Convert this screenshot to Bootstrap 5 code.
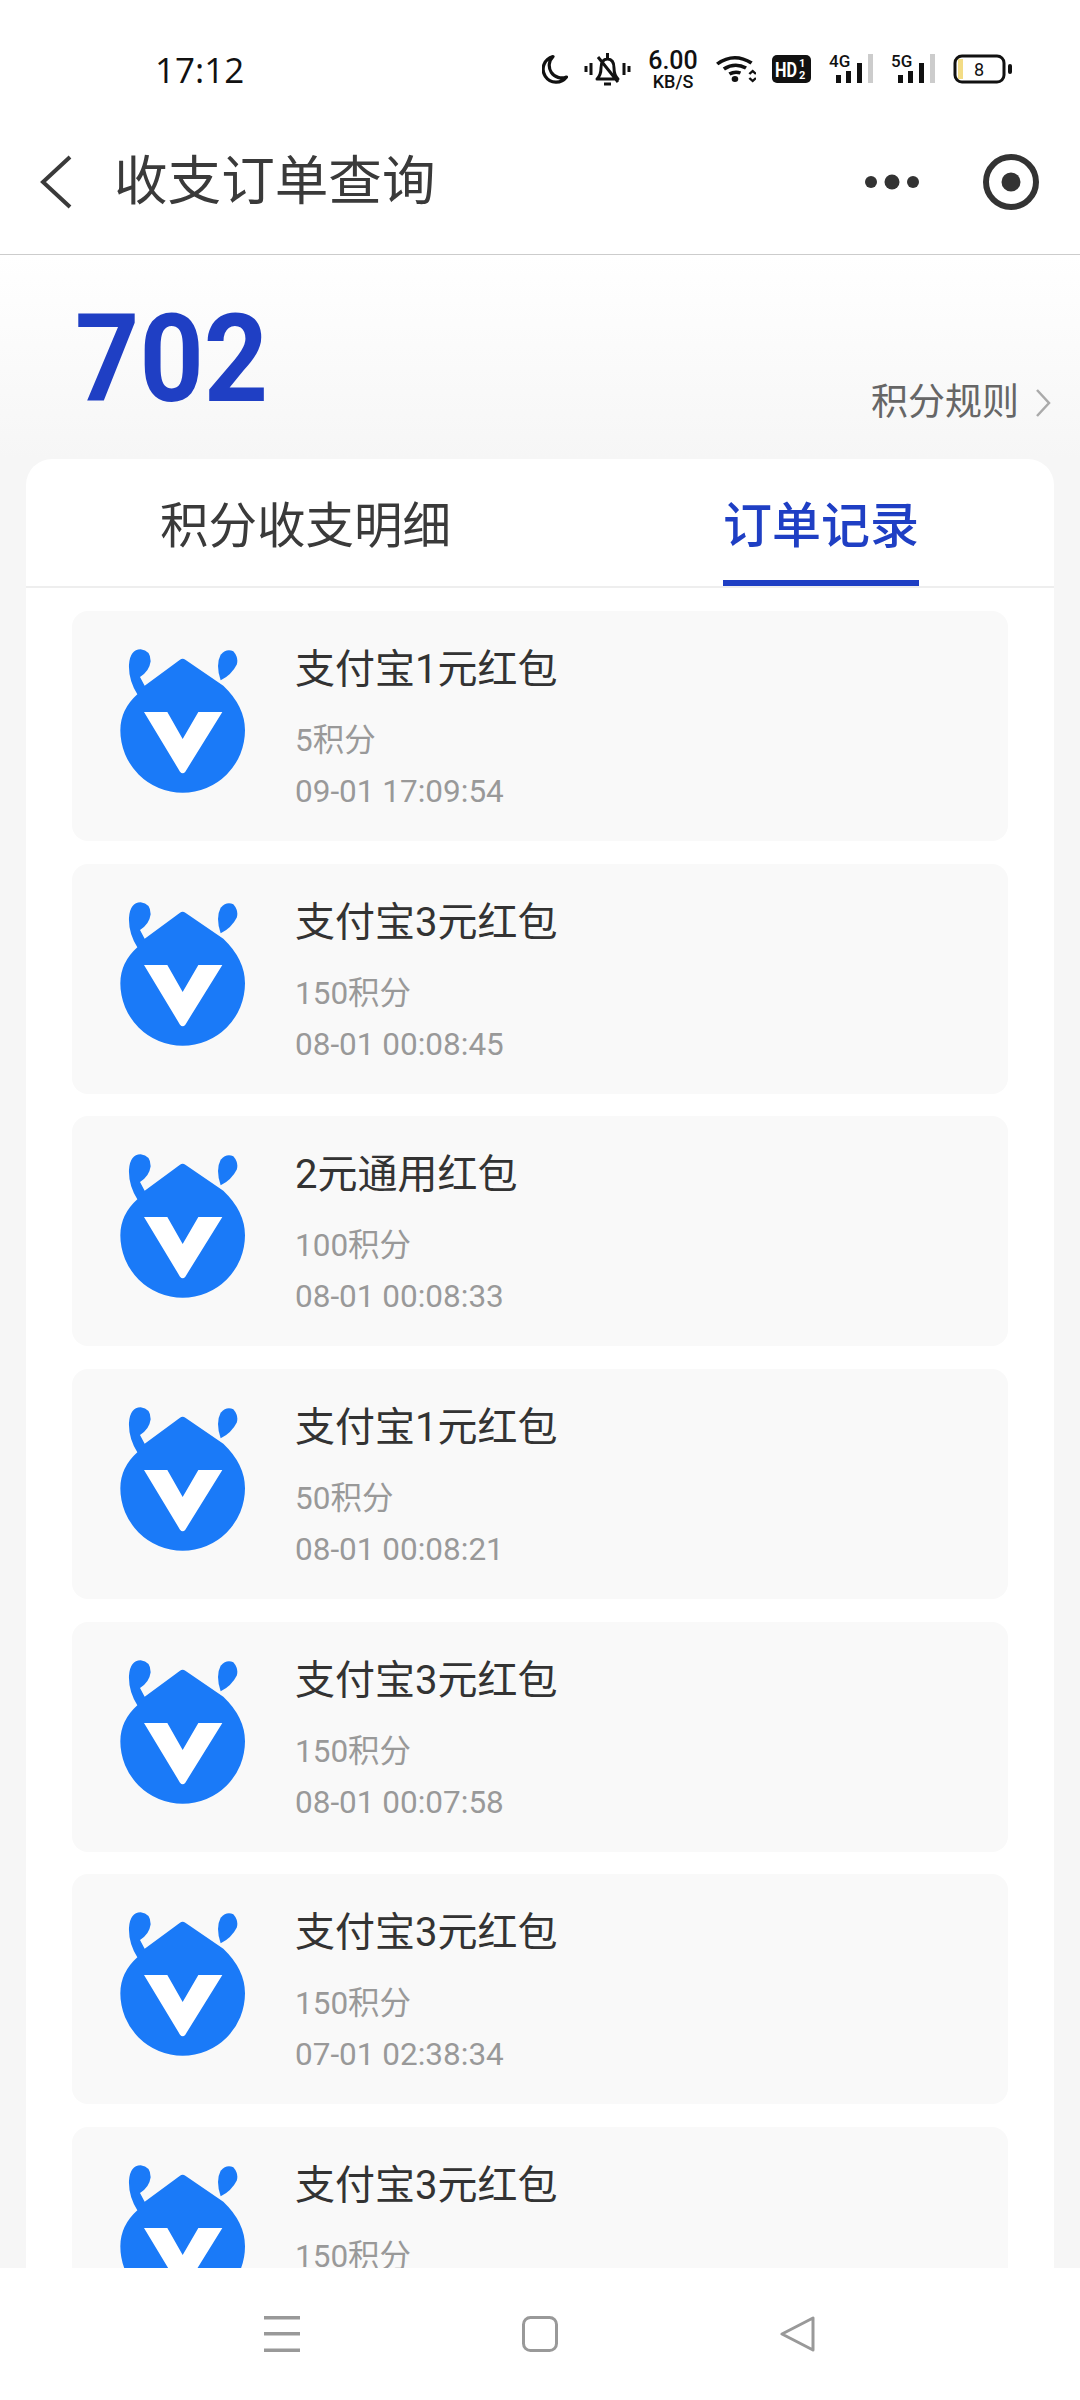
<!DOCTYPE html>
<html lang="zh-CN">
<head>
    <meta charset="UTF-8">
    <meta name="viewport" content="width=device-width, initial-scale=1.0">
    <title>收支订单查询</title>
    <link href="https://cdn.jsdelivr.net/npm/bootstrap@5.3.0/dist/css/bootstrap.min.css" rel="stylesheet">
    <style>
        html, body { margin: 0; background: #fff; }
        body { font-family: Roboto, "Noto Sans CJK SC", sans-serif; }
        .phone { width: 1080px; height: 2400px; overflow: hidden; background: #f6f6f6; }
        .status-row { height: 120px; padding: 0 68px 0 155px; background: #fff; color: #111; }
        .clock { font-family: "Open Sans", sans-serif; font-size: 35px; line-height: 1; margin-top: 18px; }
        .status-icons { gap: 16px; margin-top: 18px; }
        .sig-icon { margin-left: 2px; margin-bottom: 6px; }
        .batt-icon { margin-left: 2px; }
        .speed { width: 52px; text-align: center; font-weight: 500; line-height: 1; }
        .speed b { display: block; font-size: 25px; font-weight: 500; }
        .speed i { display: block; font-size: 18px; font-style: normal; }
        .title-row { height: 135px; padding: 0 41px 10px 40px; background: #fff; border-bottom: 1px solid #ccc; }
        .page-title { font-size: 53.6px; line-height: 70px; color: #3a3a3a; margin-left: 42px; }
        .title-tools { gap: 64px; }
        .hero { height: 204px; padding: 0 29px 0 75px; background: linear-gradient(#fff, #f6f6f6); }
        .points { font-size: 122px; line-height: 150px; font-weight: 700; color: #1f3fc4; margin-top: 30px; transform: scaleX(.92); transform-origin: left center; }
        .rule-link { font-size: 37px; line-height: 50px; color: #666; gap: 16px; margin-top: 123px; }
        .order-panel { margin: 0 26px; background: #fff; border-radius: 26px 26px 0 0; }
        .panel-tabs { height: 129px; border-bottom: 2px solid #eee; padding-left: 134px; gap: 272px; }
        .panel-tab { font-size: 48.5px; line-height: 135px; color: #3a3a3a; }
        .panel-tab-on { font-size: 49px; color: #1f3fc4; font-weight: 500; height: 127px; border-bottom: 6px solid #1f3fc4; }
        .order-list { padding: 23px 46px 0; }
        .order-item { height: 230px; margin-bottom: 22.67px; padding: 38px 0 0 48px; background: #f9f9f9; border-radius: 16px; gap: 50px; }
        .order-name { font-size: 40px; line-height: 50px; color: #333; margin-top: -4px; }
        .order-meta { font-size: 31.5px; line-height: 44px; color: #999; }
        .order-points { margin-top: 24px; }
        .order-date { margin-top: 7px; }
        .bottom-row { height: 132px; background: #fff; gap: 222px; }
    </style>
</head>
<body>
    <svg width="0" height="0" class="d-block">
        <symbol id="logo" viewBox="180 148 375 432">
            <path fill="#1a7af8" d="M360 180Q368 175 376 180L490 258Q555 320 555 392A187 187 0 1 1 181 392Q181 330 232 284Q205 240 207 195Q210 150 242 149Q272 152 272 185Q268 215 240 232L254 258Z"/>
            <path fill="#1a7af8" d="M482 242Q466 195 482 165Q500 145 520 155Q537 175 530 195Q515 225 482 242Z"/>
            <path fill="#fff" d="M252 337H322L368 418L415 337H487L376 516Q368 526 360 516Z"/>
        </symbol>
    </svg>
    <div class="phone d-flex flex-column">
        <!-- status bar -->
        <div class="status-row d-flex align-items-center justify-content-between flex-shrink-0">
            <div class="clock">17:12</div>
            <div class="status-icons d-flex align-items-center">
                <svg width="26" height="30" viewBox="0 0 26 30"><path fill="none" stroke="#111" stroke-width="3.2" stroke-linejoin="round" d="M11 2.500A13 13 0 1 0 24.500 23A12.500 12.500 0 0 1 11 2.500Z"/></svg>
                <svg width="47" height="40" viewBox="0 0 47 40" fill="none" stroke="#111" stroke-width="3">
                    <path d="M2 17v6M7 14v12M40 14v12M45 17v6"/>
                    <path d="M13 30q4-4 4-11q0-9 6.500-9t6.500 9q0 7 4 11zM20 35h7M23.500 4v6M14 8l20 25" stroke-linejoin="round"/>
                </svg>
                <div class="speed"><b>6.00</b><i>KB/S</i></div>
                <svg width="41" height="28" viewBox="0 0 37 28" preserveAspectRatio="none" fill="none" stroke="#111" stroke-width="3.400">
                    <path d="M2 9Q17-3 33 8M8 14Q18 7 28 13M13 19Q18 16 23 18"/>
                    <circle cx="18" cy="24" r="3" fill="#111" stroke="none"/>
                    <path stroke-width="2.200" d="M31 19l3-3 3 3M31 23l3 3 3-3"/>
                </svg>
                <svg width="39" height="28" viewBox="0 0 39 28">
                    <rect width="39" height="28" rx="5" fill="#111"/>
                    <text x="3" y="22" font-family="Roboto" font-weight="700" font-size="21" textLength="22" lengthAdjust="spacingAndGlyphs" fill="#fff">HD</text>
                    <text x="27" y="12" font-family="Roboto" font-weight="700" font-size="11" fill="#fff">1</text>
                    <text x="27" y="24" font-family="Roboto" font-weight="700" font-size="11" fill="#fff">2</text>
                </svg>
                <svg class="sig-icon" width="44" height="34" viewBox="0 0 44 34">
                    <text x="0" y="18" font-family="Roboto" font-weight="500" font-size="17" fill="#111">4G</text>
                    <rect x="7" y="26" width="5" height="8" fill="#111"/><rect x="17" y="22" width="5" height="12" fill="#111"/><rect x="28" y="14" width="5" height="20" fill="#111"/><rect x="39" y="5" width="5" height="29" fill="#ccc"/>
                </svg>
                <svg class="sig-icon" width="44" height="34" viewBox="0 0 44 34">
                    <text x="0" y="18" font-family="Roboto" font-weight="500" font-size="17" fill="#111">5G</text>
                    <rect x="7" y="26" width="5" height="8" fill="#111"/><rect x="17" y="22" width="5" height="12" fill="#111"/><rect x="28" y="14" width="5" height="20" fill="#111"/><rect x="39" y="5" width="5" height="29" fill="#ccc"/>
                </svg>
                <svg class="batt-icon" width="59" height="30" viewBox="0 0 59 30">
                    <rect x="2" y="2" width="49" height="26" rx="7" fill="#fff" stroke="#111" stroke-width="3"/>
                    <rect x="5" y="5" width="5" height="20" fill="#f3dc85"/>
                    <rect x="55" y="10" width="4" height="10" rx="2" fill="#111"/>
                    <text x="26" y="22" text-anchor="middle" font-family="Roboto" font-size="18" fill="#111">8</text>
                </svg>
            </div>
        </div>

        <!-- title bar -->
        <div class="title-row d-flex align-items-center flex-shrink-0">
            <svg width="32" height="54" viewBox="0 0 32 54" fill="none" stroke="#3a3a3a" stroke-width="4"><path d="M30 2L3 27L30 52"/></svg>
            <div class="page-title flex-grow-1">收支订单查询</div>
            <div class="title-tools d-flex align-items-center">
                <svg width="54" height="16" viewBox="0 0 54 16" fill="#333"><circle cx="6" cy="8" r="6"/><circle cx="27" cy="8" r="7.500"/><circle cx="48" cy="8" r="6"/></svg>
                <svg width="56" height="56" viewBox="0 0 56 56"><circle cx="28" cy="28" r="25" fill="none" stroke="#333" stroke-width="6"/><circle cx="28" cy="28" r="9.500" fill="#333"/></svg>
            </div>
        </div>

        <!-- points -->
        <div class="hero d-flex justify-content-between align-items-start flex-shrink-0">
            <div class="points">702</div>
            <div class="rule-link d-flex align-items-center">
                <span>积分规则</span>
                <svg width="16" height="28" viewBox="0 0 16 28" fill="none" stroke="#aaa" stroke-width="2.500"><path d="M2 1L14 14L2 27"/></svg>
            </div>
        </div>

        <!-- orders -->
        <div class="order-panel flex-grow-1 overflow-hidden">
            <div class="panel-tabs d-flex">
                <div class="panel-tab">积分收支明细</div>
                <div class="panel-tab panel-tab-on">订单记录</div>
            </div>
            <div class="order-list" id="orders"></div>
        </div>

        <!-- nav keys -->
        <div class="bottom-row d-flex align-items-center justify-content-center flex-shrink-0">
            <svg width="36" height="36" viewBox="0 0 36 36" fill="#999"><rect width="36" height="3.500"/><rect y="16" width="36" height="3.500"/><rect y="32.500" width="36" height="3.500"/></svg>
            <svg width="36" height="36" viewBox="0 0 36 36"><rect x="1.500" y="1.500" width="33" height="33" rx="7" fill="none" stroke="#999" stroke-width="3"/></svg>
            <svg width="36" height="36" viewBox="0 0 36 36"><path d="M33 2V34L2 18Z" fill="none" stroke="#999" stroke-width="3" stroke-linejoin="round"/></svg>
        </div>
    </div>
    <script src="https://cdn.jsdelivr.net/npm/bootstrap@5.3.0/dist/js/bootstrap.bundle.min.js"></script>
    <script>
        // the last row runs under the nav keys, its date is never visible
        const orders = [
            ['支付宝1元红包', '5积分', '09-01 17:09:54'],
            ['支付宝3元红包', '150积分', '08-01 00:08:45'],
            ['2元通用红包', '100积分', '08-01 00:08:33'],
            ['支付宝1元红包', '50积分', '08-01 00:08:21'],
            ['支付宝3元红包', '150积分', '08-01 00:07:58'],
            ['支付宝3元红包', '150积分', '07-01 02:38:34'],
            ['支付宝3元红包', '150积分', '']
        ];
        document.getElementById('orders').innerHTML = orders.map(o => `
            <div class="order-item d-flex align-items-start">
                <svg width="125" height="144" class="flex-shrink-0"><use href="#logo"/></svg>
                <div>
                    <div class="order-name">${o[0]}</div>
                    <div class="order-meta order-points">${o[1]}</div>
                    <div class="order-meta order-date">${o[2]}</div>
                </div>
            </div>
        `).join('');
    </script>
</body>
</html>
